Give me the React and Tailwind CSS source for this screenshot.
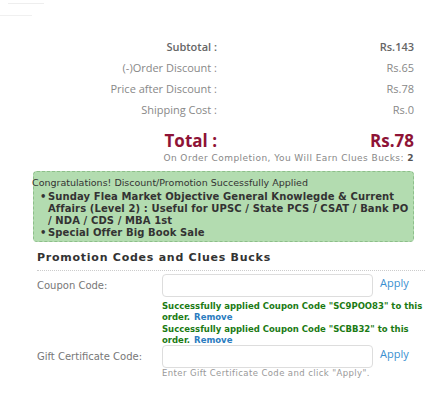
import React from 'react'

const summary = [
  { label: 'Subtotal :', value: 'Rs.143', bold: true },
  { label: '(-)Order Discount :', value: 'Rs.65' },
  { label: 'Price after Discount :', value: 'Rs.78' },
  { label: 'Shipping Cost :', value: 'Rs.0' },
]

// promo titles, broken the way the box lays them out
const promos = [
  [
    'Sunday Flea Market Objective General Knowlegde & Current',
    'Affairs (Level 2) : Useful for UPSC / State PCS / CSAT / Bank PO',
    '/ NDA / CDS / MBA 1st',
  ],
  ['Special Offer Big Book Sale'],
]

const coupons = ['SC9POO83', 'SCBB32']

function CodeRow({ label, children }) {
  return (
    <div className="flex">
      <div className="w-[125px] shrink-0 pt-[4px] text-[10px] text-[#777]">{label}</div>
      <div className="flex-1">
        <div className="flex items-start">
          <input className="h-[23px] w-[211px] rounded-[4px] border border-[#ddd] bg-white outline-none" />
          <a href="#" className="ml-[7px] text-[11px] leading-[18px] text-[#3a8fd0]" style={{ fontFamily: '"Open Sans", sans-serif' }}>Apply</a>
        </div>
        {children}
      </div>
    </div>
  )
}

export default function App() {
  return (
    <div className="relative h-[410px] w-[445px] bg-white" style={{ fontFamily: '"DejaVu Sans", Verdana, sans-serif' }}>
      {/* tab stub */}
      <div className="flex flex-col">
        <div className="ml-[8px] mt-[3px] h-px w-[36px] bg-[#eee]" />
        <div className="mt-[11px] h-px w-[32px] bg-[#f0f0f0]" />
      </div>

      <div className="mt-[24px] flex flex-col gap-[6px] pr-[31px] text-[11px]" style={{ fontFamily: '"Open Sans", sans-serif' }}>
        {summary.map(row => (
          <div key={row.label} className="flex h-[15px] items-center">
            <div className={`w-[217px] text-right ${row.bold ? 'font-semibold text-[#666]' : 'text-[#888]'}`}>{row.label}</div>
            <div className={`flex-1 text-right ${row.bold ? 'font-semibold text-[#666]' : 'text-[#888]'}`}>{row.value}</div>
          </div>
        ))}
      </div>

      <div className="mt-[13px] pr-[31px]">
        <div className="flex items-center text-[17px] font-bold leading-[20px] text-[#8e1336]" style={{ fontFamily: '"Open Sans", sans-serif' }}>
          <div className="w-[217px] text-right">Total :</div>
          <div className="flex-1 text-right">Rs.78</div>
        </div>
        <div className="mt-[1px] text-right text-[9px] tracking-[0.45px] text-[#888]">
          On Order Completion, You Will Earn Clues Bucks: <span className="font-bold text-[#555]">2</span>
        </div>
      </div>

      <div className="ml-[33px] mr-[31px] mt-[5px] rounded-[4px] border border-dashed border-[#8dbf8a] bg-[#b3dcb0] pb-[2px] pt-[4px] text-[#333]">
        <div className="-ml-[2px] text-[9.5px] leading-[13px]">Congratulations! Discount/Promotion Successfully Applied</div>
        <ul className="ml-[6px] mt-[2px] flex flex-col text-[10px] font-bold leading-[12px] tracking-[0.1px]">
          {promos.map(lines => (
            <li key={lines[0]} className="flex">
              <span className="w-[8px] shrink-0">•</span>
              <span className="whitespace-nowrap">
                {lines.map(l => <span key={l} className="block">{l}</span>)}
              </span>
            </li>
          ))}
        </ul>
      </div>

      <div className="ml-[37px] mr-[20px] mt-[8px]">
        <div className="border-b border-dotted border-[#ccc] pb-[4px] text-[11px] font-bold tracking-[0.75px] text-[#333]">
          Promotion Codes and Clues Bucks
        </div>
        <div className="mt-[3px] flex flex-col">
          <CodeRow label="Coupon Code:">
            <div className="mb-[-1px] mt-[4px] flex flex-col text-[8.5px] font-bold leading-[11.3px] text-[#1b7a14]">
              {coupons.map(c => (
                <div key={c}>
                  <div className="whitespace-nowrap">Successfully applied Coupon Code "{c}" to this</div>
                  <div className="flex gap-[4px]">
                    <span>order.</span>
                    <a href="#" className="text-[#2a7cc0]">Remove</a>
                  </div>
                </div>
              ))}
            </div>
          </CodeRow>
          <CodeRow label="Gift Certificate Code:">
            <div className="text-[8.5px] leading-[10px] tracking-[0.4px] text-[#999]">Enter Gift Certificate Code and click "Apply".</div>
          </CodeRow>
        </div>
      </div>
    </div>
  )
}
